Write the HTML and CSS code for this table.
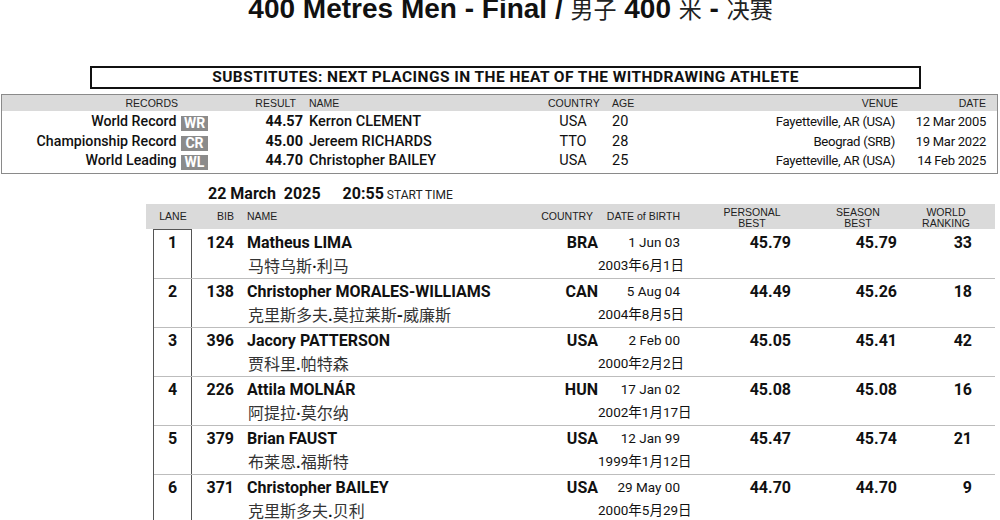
FILE: index.html
```html
<!DOCTYPE html>
<html lang="en">
<head>
<meta charset="utf-8">
<title>400 Metres Men - Final</title>
<link rel="stylesheet" href="styles.css">
</head>
<body>
<h1 class="title">400 Metres Men - Final / <span class="cjk">男子</span> 400 <span class="cjk">米</span> - <span class="cjk">决赛</span></h1>

<div class="subs">SUBSTITUTES: NEXT PLACINGS IN THE HEAT OF THE WITHDRAWING ATHLETE</div>

<div class="records">
  <div class="rec-row rec-head">
    <div class="r-rec">RECORDS</div>
    <div class="r-res">RESULT</div>
    <div class="r-name">NAME</div>
    <div class="r-cty">COUNTRY</div>
    <div class="r-age">AGE</div>
    <div class="r-venue">VENUE</div>
    <div class="r-date">DATE</div>
  </div>
  <div class="rec-row">
    <div class="r-rec">World Record <span class="badge">WR</span></div>
    <div class="r-res">44.57</div>
    <div class="r-name">Kerron CLEMENT</div>
    <div class="r-cty">USA</div>
    <div class="r-age">20</div>
    <div class="r-venue">Fayetteville, AR (USA)</div>
    <div class="r-date">12 Mar 2005</div>
  </div>
  <div class="rec-row">
    <div class="r-rec">Championship Record <span class="badge">CR</span></div>
    <div class="r-res">45.00</div>
    <div class="r-name">Jereem RICHARDS</div>
    <div class="r-cty">TTO</div>
    <div class="r-age">28</div>
    <div class="r-venue">Beograd (SRB)</div>
    <div class="r-date">19 Mar 2022</div>
  </div>
  <div class="rec-row">
    <div class="r-rec">World Leading <span class="badge">WL</span></div>
    <div class="r-res">44.70</div>
    <div class="r-name">Christopher BAILEY</div>
    <div class="r-cty">USA</div>
    <div class="r-age">25</div>
    <div class="r-venue">Fayetteville, AR (USA)</div>
    <div class="r-date">14 Feb 2025</div>
  </div>
</div>

<section class="startlist">
  <div class="when">
    <span class="day">22 March&nbsp; 2025</span>
    <span class="time">20:55</span>
    <span class="time-label">START TIME</span>
  </div>

  <div class="sl-head">
    <div></div>
    <div class="h-lane">LANE</div>
    <div class="h-bib">BIB</div>
    <div class="h-name">NAME</div>
    <div class="h-cty">COUNTRY</div>
    <div class="h-dob">DATE of BIRTH</div>
    <div class="h-pb">PERSONAL<br>BEST</div>
    <div class="h-sb">SEASON<br>BEST</div>
    <div class="h-wr">WORLD<br>RANKING</div>
  </div>

  <div class="rows">
    <div class="row first">
      <div class="lane">1</div>
      <div class="bib">124</div>
      <div class="name"><div class="l1">Matheus LIMA</div><div class="l2 cn">马特乌斯<b>·</b>利马</div></div>
      <div class="cty">BRA</div>
      <div class="dob"><div class="l1">1 Jun 03</div><div class="l2">2003年6月1日</div></div>
      <div class="pb">45.79</div>
      <div class="sb">45.79</div>
      <div class="wr">33</div>
    </div>
    <div class="row">
      <div class="lane">2</div>
      <div class="bib">138</div>
      <div class="name"><div class="l1">Christopher MORALES-WILLIAMS</div><div class="l2 cn">克里斯多夫<b>.</b>莫拉莱斯<b>-</b>威廉斯</div></div>
      <div class="cty">CAN</div>
      <div class="dob"><div class="l1">5 Aug 04</div><div class="l2">2004年8月5日</div></div>
      <div class="pb">44.49</div>
      <div class="sb">45.26</div>
      <div class="wr">18</div>
    </div>
    <div class="row">
      <div class="lane">3</div>
      <div class="bib">396</div>
      <div class="name"><div class="l1">Jacory PATTERSON</div><div class="l2 cn">贾科里<b>.</b>帕特森</div></div>
      <div class="cty">USA</div>
      <div class="dob"><div class="l1">2 Feb 00</div><div class="l2">2000年2月2日</div></div>
      <div class="pb">45.05</div>
      <div class="sb">45.41</div>
      <div class="wr">42</div>
    </div>
    <div class="row">
      <div class="lane">4</div>
      <div class="bib">226</div>
      <div class="name"><div class="l1">Attila MOLNÁR</div><div class="l2 cn">阿提拉<b>·</b>莫尔纳</div></div>
      <div class="cty">HUN</div>
      <div class="dob"><div class="l1">17 Jan 02</div><div class="l2">2002年1月17日</div></div>
      <div class="pb">45.08</div>
      <div class="sb">45.08</div>
      <div class="wr">16</div>
    </div>
    <div class="row">
      <div class="lane">5</div>
      <div class="bib">379</div>
      <div class="name"><div class="l1">Brian FAUST</div><div class="l2 cn">布莱恩<b>.</b>福斯特</div></div>
      <div class="cty">USA</div>
      <div class="dob"><div class="l1">12 Jan 99</div><div class="l2">1999年1月12日</div></div>
      <div class="pb">45.47</div>
      <div class="sb">45.74</div>
      <div class="wr">21</div>
    </div>
    <div class="row">
      <div class="lane">6</div>
      <div class="bib">371</div>
      <div class="name"><div class="l1">Christopher BAILEY</div><div class="l2 cn">克里斯多夫<b>.</b>贝利</div></div>
      <div class="cty">USA</div>
      <div class="dob"><div class="l1">29 May 00</div><div class="l2">2000年5月29日</div></div>
      <div class="pb">44.70</div>
      <div class="sb">44.70</div>
      <div class="wr">9</div>
    </div>
  </div>
</section>
</body>
</html>
```

FILE: styles.css
```css
html, body {
  margin: 0;
  padding: 0;
  background: #fff;
}

body {
  width: 1000px;
  color: #111;
  font-family: Roboto, "Noto Sans CJK SC", sans-serif;
  overflow: hidden;
}

/* ---------- Title ---------- */
.title {
  margin: -6px 0 0;
  padding-left: 21px;
  height: 29px;
  text-align: center;
  font-family: "Liberation Sans", "Noto Sans CJK SC", sans-serif;
  font-weight: 700;
  font-size: 28px;
  line-height: 29px;
  color: #111;
  white-space: nowrap;
}

.title .cjk {
  font-family: "Noto Sans CJK SC", sans-serif;
  font-weight: 400;
  font-size: 23px;
  color: #222;
}

/* ---------- Substitutes banner ---------- */
.subs {
  box-sizing: border-box;
  margin: 43px 0 0 90px;
  width: 831px;
  height: 23px;
  border: 2px solid #111;
  text-align: center;
  font-weight: 700;
  font-size: 15.5px;
  letter-spacing: 0.45px;
  line-height: 19px;
  color: #111;
  white-space: nowrap;
}

/* ---------- Records ---------- */
.records {
  box-sizing: border-box;
  margin: 5px 0 0 1px;
  width: 997px;
  height: 80px;
  border: 1px solid #8a8a8a;
}

.rec-row {
  display: grid;
  grid-template-columns: 208px 93px 245px 50px 102px 198px 88px;
  height: 19.5px;
  line-height: 19.5px;
  font-size: 14.5px;
  font-weight: 500;
  white-space: nowrap;
}

.rec-head {
  height: 16px;
  line-height: 16px;
  background: #dadada;
  font-family: "Liberation Sans", Arial, sans-serif;
  font-size: 10.5px;
  color: #222;
  margin-bottom: 1px;
}

.rec-head > div {
  font-weight: 400;
}

.r-rec { text-align: right; padding-right: 2px; font-size: 14.2px; }
.rec-head .r-rec { padding-right: 32px; font-size: 10.5px; }
.r-res { text-align: right; font-weight: 700; }
.rec-head .r-res { padding-right: 7px; }
.r-name { padding-left: 6px; }
.r-cty { text-align: center; font-weight: 400; }
.r-age { padding-left: 14px; font-weight: 400; }
.r-venue {
  text-align: right;
  padding-right: 3px;
  font-weight: 400;
  font-size: 13.2px;
  letter-spacing: -0.3px;
}
.rec-head .r-venue { padding-right: 0; font-size: 10.5px; letter-spacing: 0; }
.r-date {
  text-align: right;
  font-weight: 400;
  font-size: 13px;
  letter-spacing: -0.25px;
}
.rec-head .r-date { font-size: 10.5px; letter-spacing: 0; }

.badge {
  display: inline-block;
  width: 27px;
  height: 15px;
  line-height: 15px;
  margin-left: 1px;
  background: #8b8b8b;
  color: #fff;
  font-weight: 700;
  font-size: 14px;
  text-align: center;
  vertical-align: -2px;
}

/* ---------- Start list ---------- */
.startlist {
  margin: 10px 0 0 146px;
  width: 849px;
}

.when {
  height: 20px;
  line-height: 20px;
  padding-left: 62px;
  white-space: nowrap;
  display: flex;
  align-items: baseline;
}

.when .day {
  font-weight: 700;
  font-size: 16px;
}

.when .time {
  font-weight: 700;
  font-size: 16px;
  margin-left: 22px;
}

.when .time-label {
  font-size: 12px;
  margin-left: 3px;
  color: #222;
}

.sl-head {
  display: grid;
  grid-template-columns: 7px 38px 43px 286px 78px 82px 111px 106px 98px;
  align-items: center;
  height: 25px;
  background: #dadada;
  font-family: "Liberation Sans", Arial, sans-serif;
  font-size: 10.5px;
  line-height: 11px;
  color: #222;
  white-space: nowrap;
}

.h-lane { text-align: center; padding-left: 2px; }
.h-bib { text-align: right; }
.h-name { padding-left: 13px; }
.h-cty { text-align: right; padding-right: 5px; }
.h-dob { text-align: right; }
.h-pb { text-align: center; padding-left: 33px; padding-top: 2px; }
.h-sb { text-align: center; padding-left: 28px; padding-top: 2px; }
.h-wr { text-align: center; padding-top: 2px; }

.rows {
  margin-left: 7px;
  border-left: 1px solid #555;
}

.row {
  display: grid;
  grid-template-columns: 38px 42px 286px 78px 82px 111px 106px 75px 23px;
  box-sizing: border-box;
  height: 49px;
  border-bottom: 1px solid #bdbdbd;
  font-size: 16px;
  white-space: nowrap;
}

.row.first {
  height: 50px;
  padding-top: 1px;
}

.row.first .lane {
  margin-top: -1px;
  border-top: 1px solid #555;
}

.row > div {
  line-height: 23px;
  padding-top: 1px;
}

.row.first > .lane {
  padding-top: 1px;
}

.lane {
  box-sizing: border-box;
  border-right: 1px solid #555;
  text-align: center;
  font-weight: 700;
}

.bib {
  text-align: right;
  font-weight: 700;
}

.name {
  padding-left: 13px;
}

.name .l1 {
  font-weight: 700;
}

.l2 {
  line-height: 22px;
}

.cn {
  font-family: "Noto Sans CJK SC", sans-serif;
  font-size: 16px;
  color: #333;
  padding-left: 1px;
}

.cn b {
  font-family: Roboto, sans-serif;
  font-weight: 700;
  color: #111;
}

.cty {
  text-align: right;
  font-weight: 700;
}

.dob {
  text-align: right;
  font-size: 13.5px;
}

.dob .l2 {
  font-family: Roboto, "Noto Sans CJK SC", sans-serif;
  font-size: 13.5px;
  padding-right: 1px;
}

.pb, .sb, .wr {
  text-align: right;
  font-weight: 700;
}
```
